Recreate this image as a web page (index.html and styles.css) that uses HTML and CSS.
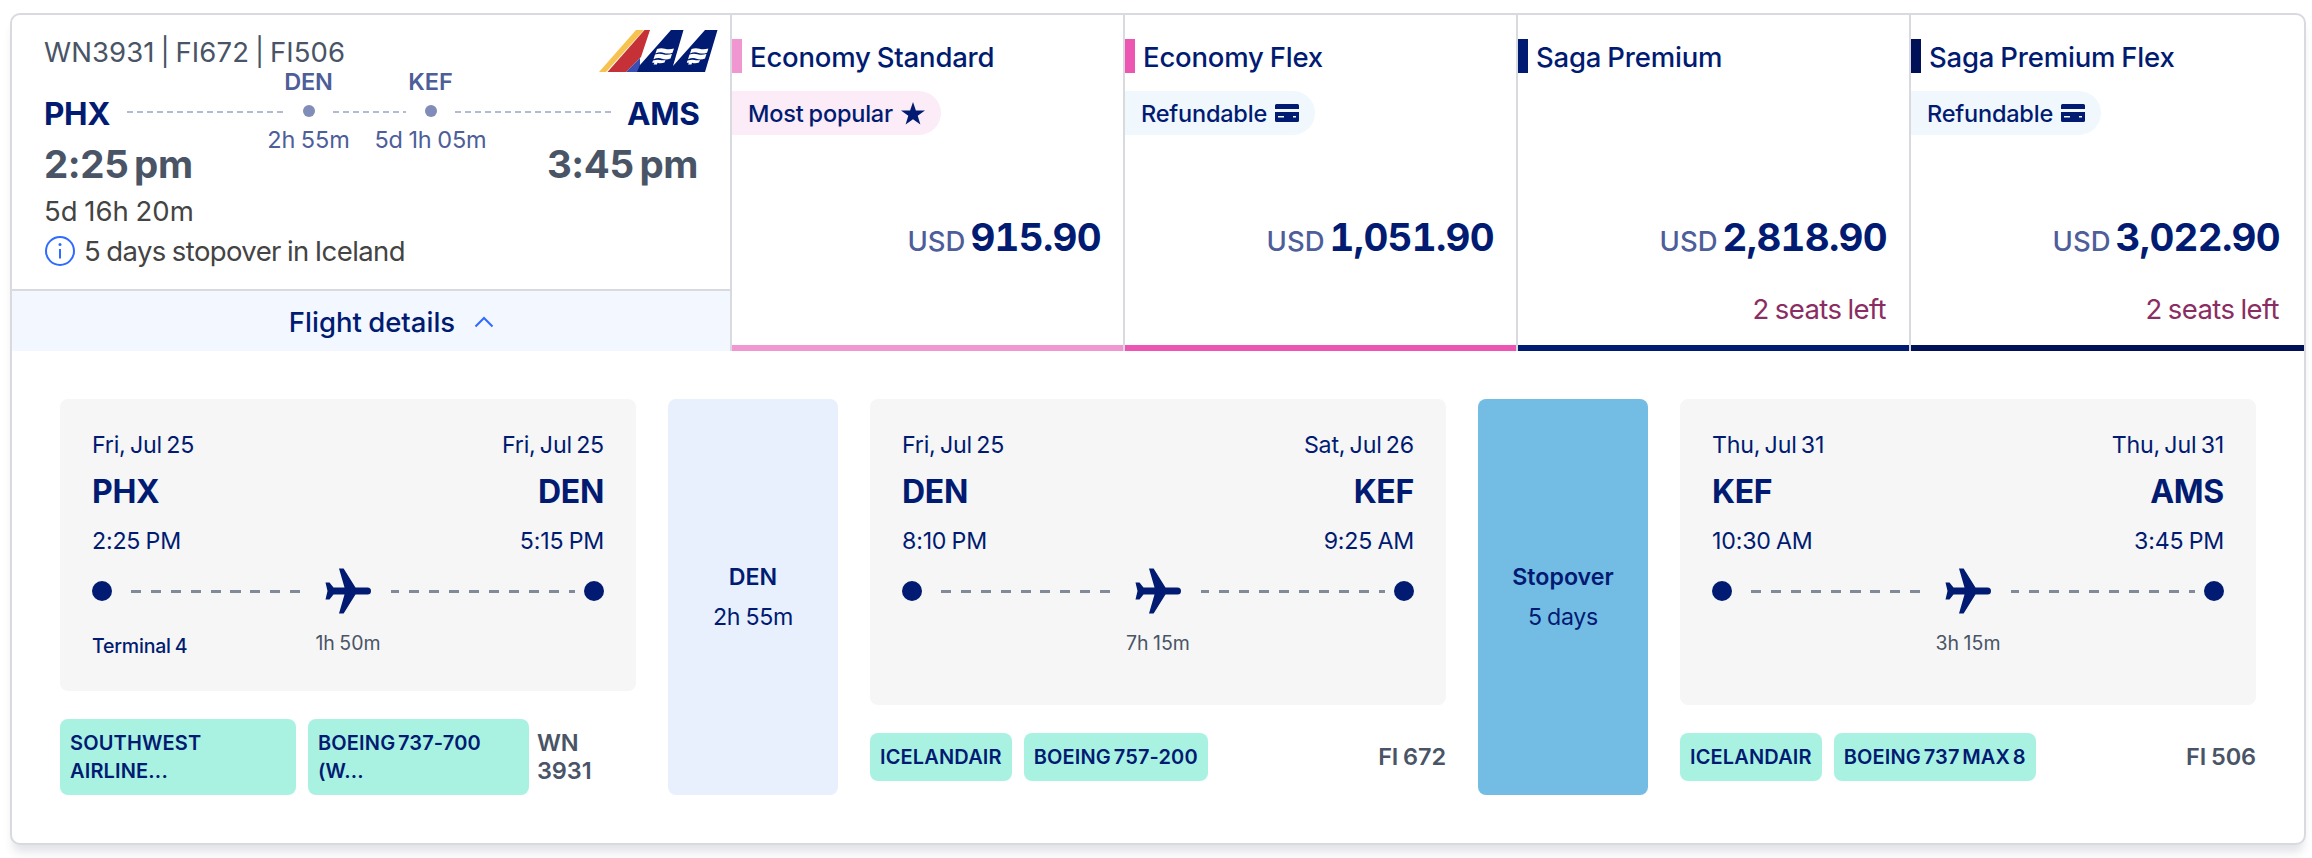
FILE: index.html
```html
<!DOCTYPE html>
<html lang="en">
<head>
    <meta charset="UTF-8">
    <meta name="viewport" content="width=device-width, initial-scale=1.0">
    <title>Select flight</title>
    <link rel="stylesheet" href="styles.css">
</head>
<body>
    <!-- shared icons -->
    <svg class="sprite" width="0" height="0">
        <symbol id="plane" viewBox="0 0 47 46">
            <path d="M14 .5h4.6L30.500 19.500H42.500a3.500 3.500 0 0 1 0 7H30.500L18.600 45.500H14L19.500 26.500H8.500L4.500 31.500H0.500L2.500 23L0.500 14.500H4.500L8.500 19.500H19.500z"/>
        </symbol>
        <symbol id="credit-card" viewBox="0 0 24 18">
            <path fill-rule="evenodd" d="M1.500 0h21A1.500 1.500 0 0 1 24 1.500V5H0V1.500A1.500 1.500 0 0 1 1.500 0zM0 8h24v8.500a1.500 1.500 0 0 1-1.500 1.500h-21A1.500 1.500 0 0 1 0 16.500zM3 12v1.500h6V12zM18 12v1.500h3V12z"/>
        </symbol>
        <symbol id="flag" viewBox="0 0 22 18">
            <path d="M5 1.500Q9 0 13 1.200T22 1L20.500 5.200Q16 6.900 12 5.400T3.500 5.900zM3 7Q7 5.500 11 6.700T20 6.500L18.500 11Q14 12.700 10 11.200T1.500 11.700zM1 13Q5 12 8 12.500T13.500 12.500L12.500 15Q9 16.500 5.500 15.300L5 17H1.500L2.500 15.300H.2z"/>
        </symbol>
    </svg>

    <div class="flight-card">
        <div class="summary">
            <div class="itinerary">
                <div class="itinerary-body">
                    <div class="top-row">
                        <span class="flight-numbers">WN3931 | FI672 | FI506</span>
                        <svg class="airline-logos" viewBox="0 0 119 42" width="119" height="42">
                            <path fill="#f7c350" d="M37 0h8L7 42H0z"/>
                            <path fill="#c53136" d="M45.500 0H51L42 27 27 42H8.500z"/>
                            <path fill="#3b4fb0" d="M41 28V42H27z"/>
                            <path fill="#001b71" d="M72 0h12.500L74 36 106 0h12.500L106 42H38l3-7z"/>
                            <g fill="#fff">
                                <use href="#flag" x="53" y="17.500" width="22" height="18"/>
                                <use href="#flag" x="87.500" y="17.500" width="22" height="18"/>
                            </g>
                        </svg>
                    </div>
                    <div class="route">
                        <span class="route-code">PHX</span>
                        <span class="route-line"></span>
                        <div class="stop">
                            <span class="stop-code">DEN</span>
                            <span class="stop-dot"></span>
                            <span class="stop-time">2h 55m</span>
                        </div>
                        <span class="route-line short"></span>
                        <div class="stop">
                            <span class="stop-code">KEF</span>
                            <span class="stop-dot"></span>
                            <span class="stop-time">5d 1h 05m</span>
                        </div>
                        <span class="route-line"></span>
                        <span class="route-code">AMS</span>
                    </div>
                    <div class="times">
                        <span>2:25 pm</span>
                        <span>3:45 pm</span>
                    </div>
                    <div class="duration">5d 16h 20m</div>
                    <div class="stopover-note">
                        <svg viewBox="0 0 30 30" width="30" height="30" fill="none" stroke="#2f6bff" stroke-width="2">
                            <circle cx="15" cy="15" r="14"/>
                            <path d="M15 13v9.500"/>
                            <circle cx="15" cy="8.500" r="1.500" fill="#2f6bff" stroke="none"/>
                        </svg>
                        <span>5 days stopover in Iceland</span>
                    </div>
                </div>
                <div class="details-toggle">
                    <span>Flight details</span>
                    <svg viewBox="0 0 20 12" width="20" height="12" fill="none" stroke="#2f6bff" stroke-width="2">
                        <path d="M1.500 10.500L10 2l8.500 8.500"/>
                    </svg>
                </div>
            </div>

            <div class="fare economy-standard">
                <div class="fare-name">Economy Standard</div>
                <div class="badge popular">
                    <span>Most popular</span>
                    <svg viewBox="0 0 24 23" width="24" height="23" fill="#001b71">
                        <path d="M12 0l2.900 8.400H24l-7.300 5.400L19.400 22.500 12 17.300 4.600 22.500l2.700-8.700L0 8.400h9.100z"/>
                    </svg>
                </div>
                <div class="price"><span class="currency">USD</span><span class="amount">915.90</span></div>
            </div>
            <div class="fare economy-flex">
                <div class="fare-name">Economy Flex</div>
                <div class="badge">
                    <span>Refundable</span>
                    <svg width="24" height="18" fill="#001b71"><use href="#credit-card"/></svg>
                </div>
                <div class="price"><span class="currency">USD</span><span class="amount">1,051.90</span></div>
            </div>
            <div class="fare saga-premium">
                <div class="fare-name">Saga Premium</div>
                <div class="price"><span class="currency">USD</span><span class="amount">2,818.90</span></div>
                <div class="seats">2 seats left</div>
            </div>
            <div class="fare saga-flex">
                <div class="fare-name">Saga Premium Flex</div>
                <div class="badge">
                    <span>Refundable</span>
                    <svg width="24" height="18" fill="#001b71"><use href="#credit-card"/></svg>
                </div>
                <div class="price"><span class="currency">USD</span><span class="amount">3,022.90</span></div>
                <div class="seats">2 seats left</div>
            </div>
        </div>

        <div class="details">
            <div class="segment">
                <div class="segment-box">
                    <div class="row date"><span>Fri, Jul 25</span><span>Fri, Jul 25</span></div>
                    <div class="row airport"><span>PHX</span><span>DEN</span></div>
                    <div class="row time"><span>2:25 PM</span><span>5:15 PM</span></div>
                    <div class="track">
                        <span class="dot"></span>
                        <span class="dash"></span>
                        <svg class="plane" width="47" height="46"><use href="#plane"/></svg>
                        <span class="dash right"></span>
                        <span class="dot"></span>
                    </div>
                    <div class="segment-foot">
                        <span class="terminal">Terminal 4</span>
                        <span class="length">1h 50m</span>
                        <span></span>
                    </div>
                </div>
                <div class="tags">
                    <span class="tag tag-airline">SOUTHWEST AIRLINE...</span>
                    <span class="tag tag-aircraft">BOEING 737-700 (W...</span>
                    <span class="number wrap">WN 3931</span>
                </div>
            </div>

            <div class="layover">
                <strong>DEN</strong>
                <span>2h 55m</span>
            </div>

            <div class="segment">
                <div class="segment-box">
                    <div class="row date"><span>Fri, Jul 25</span><span>Sat, Jul 26</span></div>
                    <div class="row airport"><span>DEN</span><span>KEF</span></div>
                    <div class="row time"><span>8:10 PM</span><span>9:25 AM</span></div>
                    <div class="track">
                        <span class="dot"></span>
                        <span class="dash"></span>
                        <svg class="plane" width="47" height="46"><use href="#plane"/></svg>
                        <span class="dash right"></span>
                        <span class="dot"></span>
                    </div>
                    <div class="segment-foot">
                        <span></span>
                        <span class="length">7h 15m</span>
                        <span></span>
                    </div>
                </div>
                <div class="tags single">
                    <span class="tag">ICELANDAIR</span>
                    <span class="tag">BOEING 757-200</span>
                    <span class="number">FI 672</span>
                </div>
            </div>

            <div class="layover stopover">
                <strong>Stopover</strong>
                <span>5 days</span>
            </div>

            <div class="segment">
                <div class="segment-box">
                    <div class="row date"><span>Thu, Jul 31</span><span>Thu, Jul 31</span></div>
                    <div class="row airport"><span>KEF</span><span>AMS</span></div>
                    <div class="row time"><span>10:30 AM</span><span>3:45 PM</span></div>
                    <div class="track">
                        <span class="dot"></span>
                        <span class="dash"></span>
                        <svg class="plane" width="47" height="46"><use href="#plane"/></svg>
                        <span class="dash right"></span>
                        <span class="dot"></span>
                    </div>
                    <div class="segment-foot">
                        <span></span>
                        <span class="length">3h 15m</span>
                        <span></span>
                    </div>
                </div>
                <div class="tags single">
                    <span class="tag">ICELANDAIR</span>
                    <span class="tag">BOEING 737 MAX 8</span>
                    <span class="number">FI 506</span>
                </div>
            </div>
        </div>
    </div>
</body>
</html>
```

FILE: styles.css
```css
* { box-sizing: border-box; }
body { margin: 0; height: 858px; padding: 13px 6px 0 10px; background: #fff; font-family: Inter, "Liberation Sans", sans-serif; color: #001b71; font-size: 27.5px; letter-spacing: -0.3px; word-spacing: -1px; white-space: nowrap; overflow: hidden; }
svg { display: block; flex: none; }
.sprite { position: absolute; }

.flight-card { height: 832px; border: 2px solid #d9dadf; border-radius: 10px; background: #fff; box-shadow: 0 10px 10px -3px rgba(40, 55, 90, 0.14); }

/* top part: itinerary and fares */
.summary { display: flex; height: 336px; }
.itinerary { width: 718px; display: flex; flex-direction: column; }
.itinerary-body { height: 274px; padding: 19px 32px 0 32px; }
.top-row { display: flex; justify-content: space-between; height: 36px; line-height: 37px; margin-bottom: 21px; letter-spacing: 0.1px; word-spacing: -2px; color: #495466; }
.airline-logos { margin: -4px -20px 0 0; }
.route { display: flex; align-items: center; height: 40px; }
.route-code { width: 67px; font-size: 31.5px; font-weight: 700; line-height: 40px; padding-top: 5px; }
.route-line { flex: 1; height: 2px; margin-top: 2px; background: repeating-linear-gradient(to right, #b3bad4 0 6px, transparent 6px 10px); }
.route-line.short { flex: none; width: 73px; }
.route-code:first-child { margin-right: 16px; }
.route-code:last-child { width: 71px; margin-left: 15px; text-align: right; }
.stop { width: 49px; display: flex; flex-direction: column; align-items: center; font-size: 23.5px; letter-spacing: -0.1px; line-height: 28px; color: #4d5e99; }
.stop-code { font-weight: 600; }
.stop-dot { width: 12px; height: 12px; margin: 9px 0; border-radius: 50%; background: #808db8; }
.times { display: flex; justify-content: space-between; margin-top: 9px; font-size: 38.5px; font-weight: 700; letter-spacing: -0.4px; word-spacing: -3px; line-height: 48px; color: #495466; }
.duration { margin-top: 5px; line-height: 36px; letter-spacing: 0; color: #444; }
.stopover-note { display: flex; align-items: center; gap: 9px; height: 40px; margin: 2px 0 0 1px; letter-spacing: -0.6px; color: #444; }
.details-toggle { display: flex; align-items: center; justify-content: center; gap: 19px; height: 62px; padding: 2px 0 0 41px; border-top: 2px solid #d9dadf; background: #f3f7ff; font-weight: 500; letter-spacing: 0; }

.fare { width: 393px; display: flex; flex-direction: column; align-items: flex-start; height: 336px; padding-top: 24px; border-left: 2px solid #d9dadf; }
.fare:last-child { flex: 1; }
.fare::after { content: ""; width: 100%; height: 6px; margin-top: auto; background: var(--fare); }
.fare-name { height: 34px; padding-left: 8px; border-left: 10px solid var(--fare); font-weight: 500; letter-spacing: -0.2px; line-height: 37px; }
.economy-standard { --fare: #f096d0; }
.economy-flex { --fare: #ec55b2; }
.saga-premium { --fare: #001b71; }
.saga-flex { --fare: #001157; }
.badge { display: flex; align-items: center; gap: 8px; height: 44px; margin: 18px 0 -62px; padding: 0 16px; border-radius: 0 22px 22px 0; background: #f0f8fd; font-size: 23.5px; font-weight: 500; letter-spacing: -0.2px; }
.badge.popular { background: #fbecf7; }
.price { display: flex; align-items: baseline; align-self: flex-end; gap: 5px; height: 48px; margin: 140px 22px 0 0; line-height: 48px; }
.currency { font-weight: 500; letter-spacing: 0; color: #4d5e99; }
.amount { font-size: 38.5px; font-weight: 700; letter-spacing: -0.7px; font-variant-numeric: tabular-nums; }
.seats { align-self: flex-end; margin: 30px 23px 0 0; line-height: 37px; letter-spacing: -0.6px; color: #8a2d62; }
.saga-flex .price { margin-right: 24px; }
.saga-flex .seats { margin-right: 25px; }

/* bottom part: flight segments */
.details { display: flex; gap: 32px; height: 396px; margin: 48px 48px 0 48px; font-size: 23.2px; }
.segment { flex: 1; display: flex; flex-direction: column; min-width: 0; }
.segment-box { flex: 1; padding: 28px 32px 0; border-radius: 8px; background: #f6f6f6; }
.row { display: flex; justify-content: space-between; line-height: 36px; }
.date { word-spacing: -2px; letter-spacing: -0.2px; }
.airport { margin-top: 8px; font-size: 32px; font-weight: 700; line-height: 41px; }
.time { margin-top: 11px; letter-spacing: -0.2px; }
.track { display: flex; align-items: center; height: 46px; margin-top: 9px; }
.dot { width: 20px; height: 20px; border-radius: 50%; background: #001b71; }
.dash { width: 170px; height: 3px; margin: 0 24px 0 19px; background: repeating-linear-gradient(to right, #808a98 0 10px, transparent 10px 19.9px); }
.dash.right { flex: 1; margin: 0 9px 0 19px; background: repeating-linear-gradient(to right, #808a98 0 8px, transparent 8px 18px, #808a98 18px 20px); }
.plane { fill: #001b71; }
.segment-foot { display: grid; grid-template-columns: 1fr auto 1fr; margin-top: 15px; font-size: 19.5px; letter-spacing: 0; line-height: 28px; }
.terminal { padding-top: 3px; font-weight: 500; letter-spacing: -0.2px; }
.length { color: #495466; }
.tags { display: flex; align-items: center; margin-top: 28px; }
.tags.single { margin-bottom: 14px; }
.tag { margin-right: 12px; padding: 10px; border-radius: 8px; background: #a9f2e2; font-size: 20px; font-weight: 600; letter-spacing: 0.15px; word-spacing: -2.500px; line-height: 28px; }
.tag-airline { width: 236px; white-space: normal; }
.tag-aircraft { width: 221px; margin-right: 8px; padding-right: 30px; white-space: normal; }
.number { margin-left: auto; font-size: 23.5px; font-weight: 600; letter-spacing: -0.1px; line-height: 28px; color: #495466; }
.number.wrap { width: 75px; margin-left: 0; white-space: normal; }
.layover { width: 170px; display: flex; flex-direction: column; align-items: center; justify-content: center; gap: 4px; border-radius: 8px; background: #e8f0fe; line-height: 36px; }
.layover strong { font-weight: 600; letter-spacing: 0; }
.stopover { background: #73bde5; }
```
